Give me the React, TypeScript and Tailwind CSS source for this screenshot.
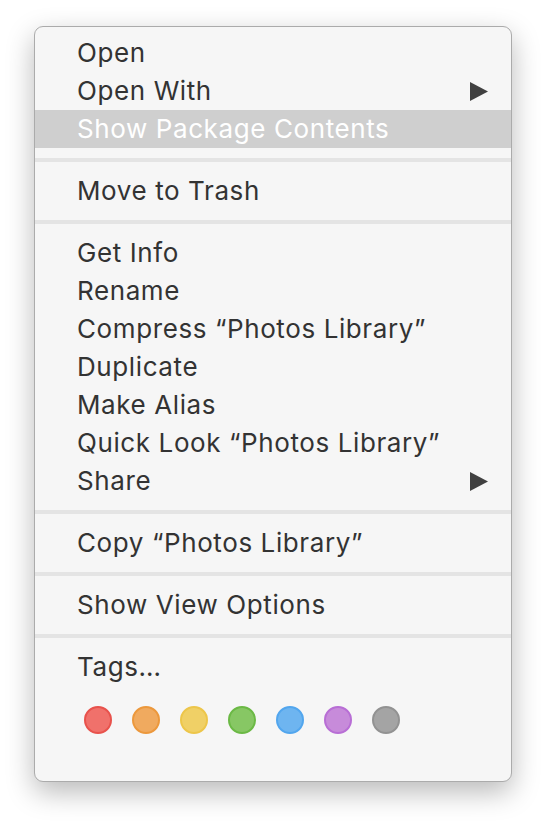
import React from "react";

type Item = { label: string; sub?: boolean; hl?: boolean };

const groups: Item[][] = [
  [{ label: "Open" }, { label: "Open With", sub: true }, { label: "Show Package Contents", hl: true }],
  [{ label: "Move to Trash" }],
  [
    { label: "Get Info" },
    { label: "Rename" },
    { label: "Compress \u201cPhotos Library\u201d" },
    { label: "Duplicate" },
    { label: "Make Alias" },
    { label: "Quick Look \u201cPhotos Library\u201d" },
    { label: "Share", sub: true },
  ],
  [{ label: "Copy \u201cPhotos Library\u201d" }],
  [{ label: "Show View Options" }],
  [{ label: "Tags\u2026" }],
];

const tags = [
  { fill: "#f0716b", border: "#e8524c" },
  { fill: "#f0aa5f", border: "#ec983c" },
  { fill: "#f0d066", border: "#edc64a" },
  { fill: "#87c764", border: "#6bb945" },
  { fill: "#6eb5f0", border: "#52a6ee" },
  { fill: "#c78bda", border: "#b86ed5" },
  { fill: "#a4a4a4", border: "#929292" },
];

function Row({ item }: { item: Item }) {
  return (
    <div
      className={
        "flex h-[38px] items-center justify-between pl-[42px] pr-[23px] " +
        (item.hl ? "bg-[#cfcfcf] text-white" : "text-[#333333]")
      }
    >
      <span className="leading-[38px] tracking-[0.6px]">{item.label}</span>
      {item.sub && (
        <svg width="18" height="19" viewBox="0 0 18 19" className="block">
          <polygon points="0,0 18,9.5 0,19" fill="#404040" />
        </svg>
      )}
    </div>
  );
}

export default function App() {
  return (
    <div className="w-[546px] h-[824px] bg-white overflow-hidden">
      <div
        className="ml-[34px] mt-[26px] w-[478px] h-[756px] rounded-[9px] border border-[#ababab] bg-[#f6f6f6] pt-[7px] shadow-[0_10px_28px_rgba(0,0,0,0.28)]"
        style={{ fontFamily: 'Inter, "Liberation Sans", Arial, sans-serif' }}
      >
        <div className="text-[26px]">
          {groups.map((g, gi) => (
            <div key={gi}>
              {gi > 0 && (
                <div className="py-[10px]">
                  <div className="h-[4px] bg-[#e4e4e4]" />
                </div>
              )}
              {g.map((it) => (
                <Row key={it.label} item={it} />
              ))}
            </div>
          ))}
        </div>
        <div className="mt-[20px] flex gap-[20px] pl-[49px]">
          {tags.map((t, i) => (
            <div
              key={i}
              className="h-[28px] w-[28px] rounded-full border-2"
              style={{ backgroundColor: t.fill, borderColor: t.border }}
            />
          ))}
        </div>
      </div>
    </div>
  );
}
